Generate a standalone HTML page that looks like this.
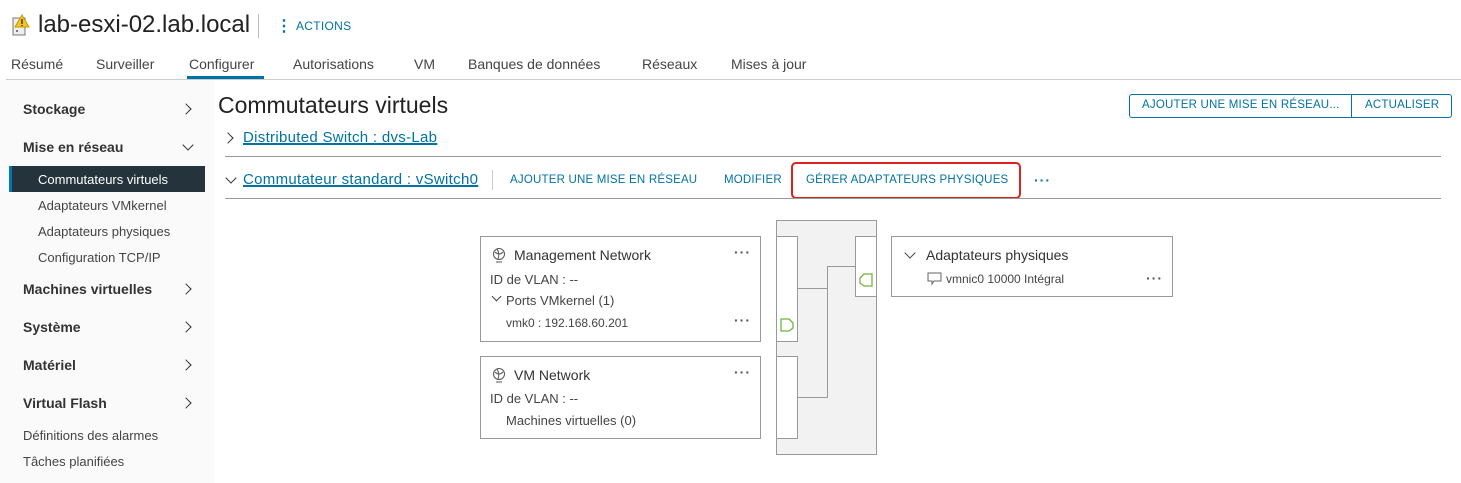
<!DOCTYPE html>
<html><head><meta charset="utf-8"><style>
*{margin:0;padding:0;box-sizing:border-box}
body{width:1461px;height:483px;background:#fff;font-family:"Liberation Sans",sans-serif;color:#333;position:relative;overflow:hidden}
.a{position:absolute;white-space:nowrap}
.tab{position:absolute;top:56px;font-size:14px;color:#444}
.side{font-size:14px;font-weight:bold;color:#333}
.sub{font-size:13px;color:#444}
.chev{position:absolute;width:8px;height:8px;border-right:1.8px solid #333;border-bottom:1.8px solid #333}
.blue{color:#0072a3}
.lnk{color:#0072a3;text-decoration:underline;text-decoration-thickness:1.5px;font-size:15px;letter-spacing:.3px}
.act{font-size:11.5px;color:#0072a3;letter-spacing:.2px}
.box{position:absolute;border:1px solid #999;background:#fff}
.dots{position:absolute;font-size:14px;font-weight:bold;color:#555;letter-spacing:1px}
.ln{position:absolute;background:#999}
</style></head><body>
<svg class="a" style="left:12px;top:14px" width="18" height="22" viewBox="0 0 18 22"><rect x="1" y="4" width="12" height="17" fill="#eee" stroke="#777"/><circle cx="5" cy="17" r="1" fill="#555"/><path d="M10 1 L17 13 L3 13 Z" fill="#f5c518" stroke="#c49b00"/><rect x="9.3" y="5" width="1.4" height="5" fill="#333"/><rect x="9.3" y="11" width="1.4" height="1.2" fill="#333"/></svg>
<div class="a" style="left:38px;top:11px;font-size:24px;color:#222">lab-esxi-02.lab.local</div>
<div class="a" style="left:258px;top:14px;width:1px;height:24px;background:#bbb"></div>
<div class="a blue" style="left:276px;top:16px;font-size:16px;font-weight:bold">⋮</div>
<div class="a blue" style="left:296px;top:19px;font-size:12px;letter-spacing:.3px">ACTIONS</div>
<div class="tab" style="left:11px">Résumé</div>
<div class="tab" style="left:96px">Surveiller</div>
<div class="tab" style="left:189px">Configurer</div>
<div class="tab" style="left:293px">Autorisations</div>
<div class="tab" style="left:414px">VM</div>
<div class="tab" style="left:468px">Banques de données</div>
<div class="tab" style="left:642px">Réseaux</div>
<div class="tab" style="left:731px">Mises à jour</div>
<div class="a" style="left:6px;top:79px;width:1455px;height:1px;background:#ccc"></div>
<div class="a" style="left:187px;top:76px;width:77px;height:3px;background:#0072a3"></div>
<div class="a" style="left:0;top:80px;width:214px;height:403px;background:#fafafa"></div>
<div class="a side" style="left:23px;top:101px">Stockage</div><div class="chev" style="left:182px;top:105px;transform:rotate(-45deg)"></div>
<div class="a side" style="left:23px;top:139px">Mise en réseau</div><div class="chev" style="left:184px;top:141px;transform:rotate(45deg)"></div>
<div class="a" style="left:9px;top:166px;width:196px;height:26px;background:#25333d;border-left:3px solid #0079b8"></div>
<div class="a" style="left:38px;top:172px;font-size:13px;color:#fff">Commutateurs virtuels</div>
<div class="a sub" style="left:38px;top:198px">Adaptateurs VMkernel</div>
<div class="a sub" style="left:38px;top:224px">Adaptateurs physiques</div>
<div class="a sub" style="left:38px;top:250px">Configuration TCP/IP</div>
<div class="a side" style="left:23px;top:281px">Machines virtuelles</div><div class="chev" style="left:182px;top:285px;transform:rotate(-45deg)"></div>
<div class="a side" style="left:23px;top:319px">Système</div><div class="chev" style="left:182px;top:323px;transform:rotate(-45deg)"></div>
<div class="a side" style="left:23px;top:357px">Matériel</div><div class="chev" style="left:182px;top:361px;transform:rotate(-45deg)"></div>
<div class="a side" style="left:23px;top:395px">Virtual Flash</div><div class="chev" style="left:182px;top:399px;transform:rotate(-45deg)"></div>
<div class="a sub" style="left:23px;top:428px">Définitions des alarmes</div>
<div class="a sub" style="left:23px;top:454px">Tâches planifiées</div>
<div class="a" style="left:218px;top:92px;font-size:23px;color:#222">Commutateurs virtuels</div>
<div class="a" style="left:1129px;top:94px;width:323px;height:24px;border:1px solid #0072a3;border-radius:3px"></div>
<div class="a" style="left:1351px;top:94px;width:1px;height:24px;background:#0072a3"></div>
<div class="a act" style="left:1142px;top:99px">AJOUTER UNE MISE EN RÉSEAU...</div>
<div class="a act" style="left:1365px;top:99px">ACTUALISER</div>
<div class="chev" style="left:224px;top:134px;transform:rotate(-45deg)"></div>
<div class="a lnk" style="left:243px;top:129px">Distributed Switch : dvs-Lab </div>
<div class="a" style="left:225px;top:156px;width:1216px;height:1px;background:#999"></div>
<div class="chev" style="left:227px;top:174px;transform:rotate(45deg)"></div>
<div class="a lnk" style="left:243px;top:171px">Commutateur standard : vSwitch0 </div>
<div class="a" style="left:492px;top:170px;width:1px;height:20px;background:#ccc"></div>
<div class="a act" style="left:510px;top:174px">AJOUTER UNE MISE EN RÉSEAU</div>
<div class="a act" style="left:724px;top:174px">MODIFIER</div>
<div class="a act" style="left:806px;top:174px">GÉRER ADAPTATEURS PHYSIQUES</div>
<div class="a" style="left:791px;top:162px;width:230px;height:37px;border:2px solid #e0201f;border-radius:5px"></div>
<div class="a blue" style="left:1034px;top:172px;font-size:14px;font-weight:bold;letter-spacing:1px">···</div>
<div class="a" style="left:225px;top:198px;width:1216px;height:1px;background:#999"></div>
<div class="a" style="left:776px;top:220px;width:101px;height:235px;background:#f2f2f2;border:1px solid #999"></div>
<div class="box" style="left:776px;top:236px;width:22px;height:106px"></div>
<div class="box" style="left:776px;top:356px;width:22px;height:83px"></div>
<div class="box" style="left:855px;top:236px;width:22px;height:61px"></div>
<div class="ln" style="left:797px;top:288px;width:31px;height:1px"></div>
<div class="ln" style="left:797px;top:397px;width:31px;height:1px"></div>
<div class="ln" style="left:827px;top:266px;width:1px;height:132px"></div>
<div class="ln" style="left:827px;top:266px;width:29px;height:1px"></div>
<svg class="a" style="left:780px;top:318px" width="14" height="14"><path d="M1 1 H9 L13 5 V10 L9 13 H1 Z" fill="none" stroke="#6db33f" stroke-width="1.3"/></svg>
<svg class="a" style="left:859px;top:273px" width="14" height="14"><path d="M13 1 H5 L1 5 V10 L5 13 H13 Z" fill="none" stroke="#6db33f" stroke-width="1.3"/></svg>
<div class="box" style="left:480px;top:236px;width:281px;height:106px"></div>
<svg class="a" style="left:492px;top:247px" width="14" height="16" viewBox="0 0 14 16"><circle cx="7" cy="7" r="5.5" fill="none" stroke="#555"/><path d="M3 5 Q7 9 11 5 M5 2 Q8 7 6 12" fill="none" stroke="#555"/><path d="M4 15 H10" stroke="#555"/></svg>
<div class="a" style="left:514px;top:247px;font-size:14px;color:#333">Management Network</div>
<div class="dots" style="left:734px;top:244px">···</div>
<div class="a sub" style="left:490px;top:272px">ID de VLAN : --</div>
<div class="chev" style="left:493px;top:293px;width:7px;height:7px;transform:rotate(45deg);border-width:1.4px;border-color:#444"></div>
<div class="a sub" style="left:506px;top:293px">Ports VMkernel (1)</div>
<div class="a" style="left:506px;top:316px;font-size:12px;color:#444">vmk0 : 192.168.60.201</div>
<div class="dots" style="left:734px;top:312px">···</div>
<div class="box" style="left:480px;top:356px;width:281px;height:83px"></div>
<svg class="a" style="left:492px;top:367px" width="14" height="16" viewBox="0 0 14 16"><circle cx="7" cy="7" r="5.5" fill="none" stroke="#555"/><path d="M3 5 Q7 9 11 5 M5 2 Q8 7 6 12" fill="none" stroke="#555"/><path d="M4 15 H10" stroke="#555"/></svg>
<div class="a" style="left:514px;top:367px;font-size:14px;color:#333">VM Network</div>
<div class="dots" style="left:734px;top:364px">···</div>
<div class="a sub" style="left:490px;top:391px">ID de VLAN : --</div>
<div class="a sub" style="left:506px;top:413px">Machines virtuelles (0)</div>
<div class="box" style="left:891px;top:236px;width:282px;height:61px"></div>
<div class="chev" style="left:906px;top:249px;transform:rotate(45deg);border-width:1.4px;border-color:#444"></div>
<div class="a" style="left:926px;top:247px;font-size:14px;color:#333">Adaptateurs physiques</div>
<svg class="a" style="left:927px;top:272px" width="16" height="14"><path d="M1 1 H14 V9 H7 L5 12 V9 H1 Z" fill="none" stroke="#666"/></svg>
<div class="a" style="left:946px;top:272px;font-size:12px;color:#444">vmnic0 10000 Intégral</div>
<div class="dots" style="left:1146px;top:270px">···</div>
</body></html>
